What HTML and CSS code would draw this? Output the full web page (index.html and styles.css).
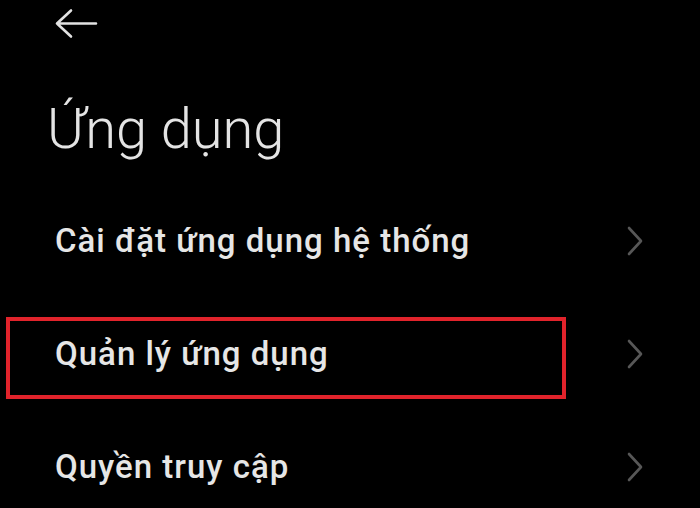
FILE: index.html
```html
<!DOCTYPE html>
<html lang="vi">
<head>
<meta charset="utf-8">
<link rel="stylesheet" href="styles.css">
</head>
<body>
<div class="screen">
  <div class="topbar">
    <svg class="back" width="44" height="32" viewBox="0 0 44 32">
      <path d="M42 15.5H3M17 2.5L3 15.5L17 28.5" fill="none" stroke="#e2e2e2" stroke-width="2.6" stroke-linecap="round" stroke-linejoin="round"/>
    </svg>
  </div>
  <h1 class="title">Ứng dụng</h1>
  <ul class="list">
    <li class="item"><span class="label">Cài đặt ứng dụng hệ thống</span><svg class="chev" width="18" height="30" viewBox="0 0 18 30"><path d="M3 2L15 15L3 28" fill="none" stroke="#575757" stroke-width="2.6" stroke-linecap="round" stroke-linejoin="round"/></svg></li>
    <li class="item highlighted"><span class="label">Quản lý ứng dụng</span><svg class="chev" width="18" height="30" viewBox="0 0 18 30"><path d="M3 2L15 15L3 28" fill="none" stroke="#575757" stroke-width="2.6" stroke-linecap="round" stroke-linejoin="round"/></svg><span class="mark"></span></li>
    <li class="item"><span class="label">Quyền truy cập</span><svg class="chev" width="18" height="30" viewBox="0 0 18 30"><path d="M3 2L15 15L3 28" fill="none" stroke="#575757" stroke-width="2.6" stroke-linecap="round" stroke-linejoin="round"/></svg></li>
  </ul>
</div>
</body>
</html>
```
FILE: styles.css
```css
html, body {
  margin: 0;
  padding: 0;
  background: #000;
}
body {
  width: 700px;
  height: 508px;
  overflow: hidden;
  font-family: Roboto, "Noto Sans", sans-serif;
  color: #e6e6e6;
}
.screen {
  display: flex;
  flex-direction: column;
}
.topbar {
  height: 46px;
  padding: 8px 0 0 54px;
  box-sizing: border-box;
}
.back {
  display: block;
}
.title {
  margin: 0;
  box-sizing: border-box;
  height: 138px;
  padding: 51px 0 0 47px;
  font-size: 56px;
  font-weight: 300;
  line-height: 64px;
  color: #e4e4e4;
}
.list {
  list-style: none;
  margin: 0;
  padding: 0;
}
.item {
  position: relative;
  height: 113px;
  display: flex;
  align-items: center;
  justify-content: space-between;
  padding: 0 56px 0 55px;
}
.label {
  font-size: 33px;
  font-weight: 500;
  letter-spacing: 1px;
  line-height: 40px;
  color: #e6e6e6;
}
.chev {
  display: block;
}
.mark {
  position: absolute;
  left: 6px;
  top: 20px;
  width: 560px;
  height: 82px;
  box-sizing: border-box;
  border: 4px solid #e1232b;
}
```
